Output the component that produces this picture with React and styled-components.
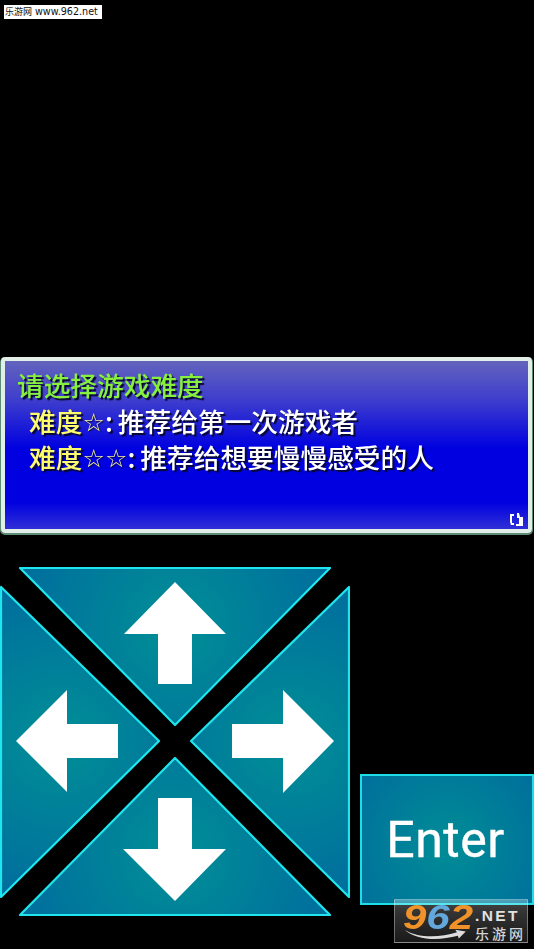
import React from 'react';
import styled, { createGlobalStyle } from 'styled-components';

const GlobalStyle = createGlobalStyle`
  html, body {
    margin: 0;
    padding: 0;
    background: #000;
  }
`;

const Page = styled.div`
  position: relative;
  width: 534px;
  height: 949px;
  overflow: hidden;
  background: #000;
  font-family: "Noto Sans CJK SC", "Noto Sans", sans-serif;
`;

const SiteTag = styled.div`
  display: flex;
  gap: 3px;
  width: 98px;
  height: 14px;
  margin: 5px 0 0 4px;
  padding-left: 1px;
  box-sizing: border-box;
  background: #fff;
  color: #111;
  font-size: 9px;
  line-height: 14px;
  white-space: nowrap;
`;

const SiteUrl = styled.span`
  font-family: "DejaVu Sans", sans-serif;
  font-size: 9.6px;
`;

const Dialog = styled.div`
  position: relative;
  box-sizing: border-box;
  height: 176px;
  margin: 338px 2px 0 1px;
  padding: 6px 0 0 12px;
  border: 4px solid #e2efe8;
  border-radius: 4px;
  box-shadow: 0 1px 0 1px #5e8a78;
  background: linear-gradient(#6363bd 0, #3c3cce 24%, #0000e0 52%, #0000e0 84%, #3030d6 100%);
`;

const Line = styled.div`
  display: flex;
  align-items: center;
  height: 36px;
  padding-left: ${(p) => p.$indent || 0}px;
  font-size: 26.7px;
  font-weight: 500;
  line-height: 36px;
  white-space: nowrap;
  color: #fff;
  text-shadow: 2px 2px 1px #080830;
  filter: blur(0.35px);
`;

const Title = styled.span`
  color: #86f03c;
`;

const Level = styled.span`
  color: #fdfc6e;
`;

const Star = styled.span`
  display: inline-block;
  width: 22.5px;
  margin-top: 4px;
  text-align: center;
  font-family: "DejaVu Sans", sans-serif;
  font-size: 25px;
  font-weight: 700;
  color: #f6f29a;
  text-shadow: 1px 1px 1px #080830;
`;

const Colon = styled.span`
  margin-right: 5px;
`;

const Cursor = styled.svg`
  position: absolute;
  right: 4px;
  bottom: 2px;
`;

const Controls = styled.div`
  display: flex;
  align-items: flex-start;
  margin-top: 34px;
`;

const Pad = styled.svg`
  display: block;
  flex: none;
`;

const EnterButton = styled.div`
  box-sizing: border-box;
  width: 174px;
  height: 131px;
  margin: 207px 0 0 10px;
  padding-right: 3px;
  display: flex;
  align-items: center;
  justify-content: center;
  border: 2px solid #1fdde6;
  background: radial-gradient(circle at 50% 55%, #008d96 0, #006f9c 100%);
  color: #fff;
  font-family: "Roboto", sans-serif;
  font-size: 50px;
  letter-spacing: 0.5px;
  -webkit-text-stroke: 0.4px #fff;
`;

const Watermark = styled.div`
  position: absolute;
  left: 394px;
  top: 899px;
  display: flex;
  gap: 2px;
  width: 134px;
  height: 44px;
  box-sizing: border-box;
  padding-left: 8px;
  border: 1px solid rgba(255, 255, 255, 0.35);
  background: linear-gradient(rgba(255, 255, 255, 0.3) 0, rgba(255, 255, 255, 0.24) 14%, rgba(255, 255, 255, 0.2) 30%, rgba(255, 255, 255, 0.1) 100%);
  font-family: "Liberation Sans", sans-serif;
`;

const Logo = styled.div`
  flex: none;
  width: 70px;
  font-size: 35px;
  line-height: 34px;
  font-weight: 700;
  font-style: italic;
  color: #f0922a;
  transform: scaleX(1.2);
  transform-origin: left;
`;

const LogoSix = styled.span`
  color: #62a8dc;
`;

const LogoSide = styled.div`
  display: flex;
  flex-direction: column;
  padding-top: 9px;
  white-space: nowrap;
`;

const Net = styled.div`
  font-size: 15.5px;
  line-height: 14px;
  font-weight: 700;
  color: #e2e2e2;
  letter-spacing: 2.4px;
`;

const SiteName = styled.div`
  margin-top: 3px;
  font-family: "Noto Sans CJK SC", sans-serif;
  font-size: 14px;
  line-height: 15px;
  font-weight: 500;
  color: #d4d4d4;
  letter-spacing: 3px;
`;

const Swoosh = styled.svg`
  position: absolute;
  left: 8px;
  top: 27px;
`;

const triangles = [
  { id: 'up', points: '20,1 330,1 175,158', arrow: '175,15 226,67 192,67 192,117 158,117 158,67 124,67', cx: 175, cy: 60 },
  { id: 'left', points: '1,20 1,330 159,174', arrow: '16,174 67,123 67,157 118,157 118,191 67,191 67,225', cx: 60, cy: 174 },
  { id: 'right', points: '349,20 349,330 191,174', arrow: '334,174 283,123 283,157 232,157 232,191 283,191 283,226', cx: 290, cy: 174 },
  { id: 'down', points: '20,348 330,348 175,191', arrow: '175,334 226,282 192,282 192,231 158,231 158,282 123,282', cx: 175, cy: 288 },
];

function DirectionPad() {
  return (
    <Pad width="350" height="350" viewBox="0 0 350 350">
      <defs>
        {triangles.map((t) => (
          <radialGradient key={t.id} id={`fill-${t.id}`} gradientUnits="userSpaceOnUse" cx={t.cx} cy={t.cy} r="165">
            <stop offset="0" stopColor="#008f96" />
            <stop offset="1" stopColor="#006d9e" />
          </radialGradient>
        ))}
      </defs>
      {triangles.map((t) => (
        <g key={t.id}>
          <polygon points={t.points} fill={`url(#fill-${t.id})`} stroke="#1fe6ee" strokeWidth="2.2" strokeLinejoin="round" />
          <polygon points={t.arrow} fill="#fff" />
        </g>
      ))}
    </Pad>
  );
}

export default function App() {
  return (
    <Page>
      <GlobalStyle />
      <SiteTag>
        <span>乐游网</span>
        <SiteUrl>www.962.net</SiteUrl>
      </SiteTag>
      <Dialog>
        <Line><Title>请选择游戏难度</Title></Line>
        <Line $indent={12}>
          <Level>难度</Level><Star>☆</Star><Colon>:</Colon>推荐给第一次游戏者
        </Line>
        <Line $indent={12}>
          <Level>难度</Level><Star>☆</Star><Star>☆</Star><Colon>:</Colon>推荐给想要慢慢感受的人
        </Line>
        <Cursor width="15" height="14" viewBox="0 0 15 14">
          <path d="M1 1h4v2H3v7h2v2H2L1 9zM8 0h2l1 4h3v9H7v-2h3V5H8z" fill="#fff" />
        </Cursor>
      </Dialog>
      <Controls>
        <DirectionPad />
        <EnterButton>Enter</EnterButton>
      </Controls>
      <Watermark>
        <Logo>9<LogoSix>6</LogoSix>2</Logo>
        <LogoSide>
          <Net>.NET</Net>
          <SiteName>乐游网</SiteName>
        </LogoSide>
        <Swoosh width="66" height="14" viewBox="0 0 72 16">
          <path d="M0 3C14 12 38 13 60 6l-2-3 12 2-8 8-1-3C38 16 14 15 0 3z" fill="#dcdcdc" />
        </Swoosh>
      </Watermark>
    </Page>
  );
}
